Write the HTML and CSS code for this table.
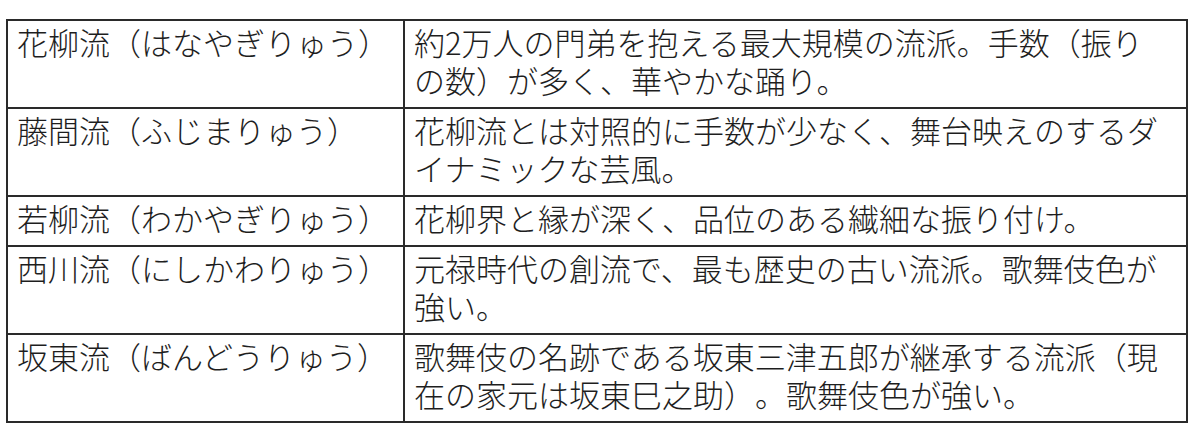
FILE: index.html
```html
<!DOCTYPE html>
<html lang="ja">
<head>
<meta charset="utf-8">
<title>日本舞踊の流派</title>
<link rel="stylesheet" href="styles.css">
</head>
<body>
<table class="schools">
<colgroup><col class="col-name"><col class="col-desc"></colgroup>
<tbody>
<tr><td class="name">花柳流（はなやぎりゅう）</td><td>約2万人の門弟を抱える最大規模の流派。手数（振りの数）が多く、華やかな踊り。</td></tr>
<tr><td class="name">藤間流（ふじまりゅう）</td><td>花柳流とは対照的に手数が少なく、舞台映えのするダイナミックな芸風。</td></tr>
<tr><td class="name">若柳流（わかやぎりゅう）</td><td>花柳界と縁が深く、品位のある繊細な振り付け。</td></tr>
<tr><td class="name">西川流（にしかわりゅう）</td><td>元禄時代の創流で、最も歴史の古い流派。歌舞伎色が強い。</td></tr>
<tr><td class="name">坂東流（ばんどうりゅう）</td><td>歌舞伎の名跡である坂東三津五郎が継承する流派（現在の家元は坂東巳之助）。歌舞伎色が強い。</td></tr>
</tbody>
</table>
</body>
</html>
```

FILE: styles.css
```css
html, body {
  margin: 0;
  padding: 0;
  background: #ffffff;
}

body {
  padding: 19px 0 0 6px;
  font-family: "Noto Sans CJK JP", "Noto Sans", sans-serif;
  color: #1e1e1e;
}

.schools {
  border-collapse: collapse;
  table-layout: fixed;
  width: 1182px;
  border: 2px solid #2a2a2a;
}

.col-name {
  width: 397px;
}

.schools td {
  border: 2px solid #2a2a2a;
  padding: 2px 20px 8px 9px;
  font-size: 31px;
  font-weight: 300;
  line-height: 38px;
  vertical-align: top;
  text-spacing-trim: space-all;
}

.schools td.name {
  padding-right: 2px;
  white-space: nowrap;
}
```
